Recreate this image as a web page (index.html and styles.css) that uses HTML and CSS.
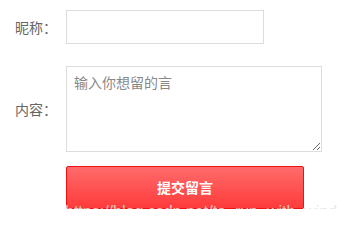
FILE: index.html
```html
<!DOCTYPE html>
<html lang="zh-CN">
<head>
    <meta charset="UTF-8">
    <title>留言</title>
    <link rel="stylesheet" href="styles.css">
</head>
<body>
    <div class="form">
        <div class="row">
            <label class="label">昵称：</label>
            <input class="field" type="text">
        </div>
        <div class="row row-content">
            <label class="label">内容：</label>
            <textarea class="area" placeholder="输入你想留的言"></textarea>
        </div>
        <div class="row row-btn">
            <button class="submit">提交留言</button>
        </div>
        <div class="watermark">https://blog.csdn.net/to_run_with_wind</div>
    </div>
</body>
</html>
```

FILE: styles.css
```css
body {
    margin: 0;
    background: #fff;
    font-family: "Noto Sans CJK SC", "Liberation Sans", sans-serif;
}

.form {
    position: relative;
    padding: 10px 0 0 15px;
}

.row {
    display: flex;
    align-items: center;
}

.row-content {
    margin-top: 22px;
}

.row-btn {
    margin-top: 14px;
    padding-left: 51px;
}

.label {
    width: 51px;
    font-size: 14px;
    color: #666;
}

.field {
    box-sizing: border-box;
    width: 198px;
    height: 34px;
    margin: 0;
    border: 1px solid #ddd;
    outline: none;
}

.area {
    box-sizing: border-box;
    width: 256px;
    height: 86px;
    margin: 0;
    padding: 5px 7px;
    border: 1px solid #ddd;
    font-family: "Noto Sans CJK SC", sans-serif;
    font-size: 14px;
    color: #333;
    outline: none;
}

.area::placeholder {
    color: #888;
}

.submit {
    box-sizing: border-box;
    width: 238px;
    height: 43px;
    margin: 0;
    padding-bottom: 3px;
    border: 1px solid #f21010;
    border-radius: 2px;
    background: linear-gradient(#ff6b6b, #ff3b3b);
    color: #fff;
    font-family: "Noto Sans CJK SC", sans-serif;
    font-size: 14px;
    font-weight: bold;
}

.watermark {
    position: absolute;
    left: 65px;
    top: 203px;
    font-family: "Liberation Sans", sans-serif;
    font-size: 16px;
    color: rgba(225, 225, 225, 0.85);
    pointer-events: none;
}
```
